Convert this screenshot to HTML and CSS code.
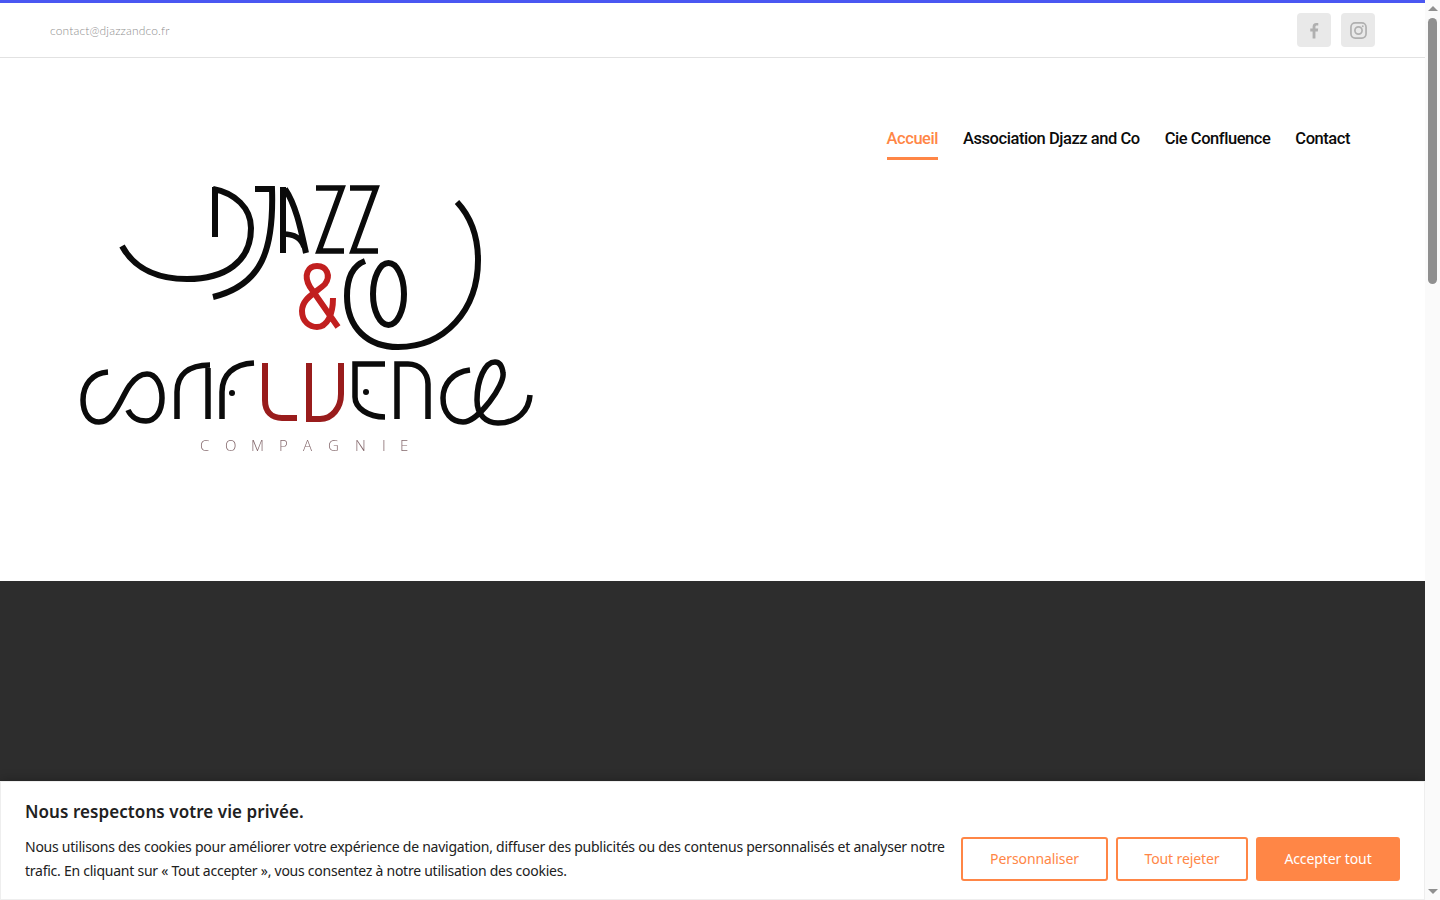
FILE: index.html
```html
<!DOCTYPE html>
<html lang="fr">
<head>
<meta charset="utf-8">
<title>Djazz and Co</title>
<link rel="stylesheet" href="styles.css">
</head>
<body>
<div class="shell">
  <div class="page">
    <div class="topbar">
      <a class="email">contact@djazzandco.fr</a>
      <div class="socials">
        <a class="social">
          <svg class="social-icon" viewBox="0 0 16 18"><path class="glyph-fill" d="M6 17.500V10H3.500V7H6V5C6 2.500 7.500 1 9.800 1c1 0 1.900.1 2.200.1v2.700h-1.500C9.300 3.800 9 4.400 9 5.300V7h2.900l-.4 3H9v7.500z"/></svg>
        </a>
        <a class="social">
          <svg class="social-icon" viewBox="0 0 18 18"><rect class="glyph-line" x="1" y="1" width="16" height="16" rx="4.500"/><circle class="glyph-line" cx="9" cy="9" r="3.800"/><circle class="glyph-fill" cx="13.500" cy="4.500" r="1"/></svg>
        </a>
      </div>
    </div>
    <header class="masthead">
      <svg class="logo" viewBox="70 175 480 290" role="img" aria-label="Djazz and Co Confluence Compagnie">
        <g class="ink upper">
          <path d="M122,246 C135,270 160,279 187,279 C225,279 251,262 251,228 C251,208 235,193 213,189"/>
          <path d="M215,187 V237"/>
          <path d="M255,189 H272 C274,250 262,285 213,297"/>
          <path d="M283,253 V187"/>
          <path d="M285,189 C296,205 301,230 306,253"/>
          <path class="thin" d="M283,234 C292,234 301,237 304,247"/>
          <path class="thin" d="M316,188 H342 L319,251 H344"/>
          <path class="thin" d="M350,188 H376 L353,251 H378"/>
          <path d="M365,261 C352,266 347,280 347,296 C347,328 368,347 398,347 C445,347 478,310 478,260 C478,235 470,216 457,202"/>
          <ellipse cx="388.500" cy="294" rx="15.500" ry="31"/>
        </g>
        <g class="ink">
          <path d="M108,372 C92,373 83,385 83,400 C83,414 90,422 99,422 C115,422 122,395 130,385 C135,378 140,374 147,374 C156,374 162,385 162,398 C162,412 155,421 146,421 C138,421 131,417 128,410"/>
          <path d="M177,419 V392 C177,375 188,365 210,365"/>
          <path d="M208,419 V368"/>
          <path d="M222,419 V392 C222,375 233,364 254,363"/>
          <path d="M385,364 H355 V397 C355,408 368,417 385,417"/>
          <path d="M397,419 V364 H408 C420,364 428,373 428,384 V419"/>
          <path d="M470,370 C452,372 443,385 443,398 C443,413 452,422 463,422 C478,422 505,385 503,373 C502,365 499,362 495,362 C485,362 477,380 477,400 C477,415 486,423 498,423 C518,423 529,410 530,395"/>
        </g>
        <circle class="dot" cx="232" cy="393" r="3"/>
        <circle class="dot" cx="366" cy="392" r="3"/>
        <g class="red">
          <path d="M338,327 L310,287 C303,275 308,266 317,266 C327,266 331,276 325,284 C316,293 302,298 302,311 C302,322 310,327 317,327 C327,327 333,315 333,298"/>
        </g>
        <g class="maroon">
          <path d="M265,363 V400 C265,412 272,418 282,418 H297"/>
          <path d="M309,363 V419 H320 C332,419 341,408 341,394 V363"/>
        </g>
        <text class="compagnie" x="200 225 251 279 303 328 355 382 400" y="451">COMPAGNIE</text>
      </svg>
      <nav class="nav">
        <a class="nav-link active">Accueil</a>
        <a class="nav-link">Association Djazz and Co</a>
        <a class="nav-link">Cie Confluence</a>
        <a class="nav-link">Contact</a>
      </nav>
    </header>
    <section class="dark"></section>
    <aside class="cookie">
      <h2 class="cookie-title">Nous respectons votre vie privée.</h2>
      <div class="cookie-row">
        <p class="cookie-text">Nous utilisons des cookies pour améliorer votre expérience de navigation, diffuser des publicités ou des contenus personnalisés et analyser notre trafic. En cliquant sur « Tout accepter », vous consentez à notre utilisation des cookies.</p>
        <div class="cookie-actions">
          <button class="btn btn-custom">Personnaliser</button>
          <button class="btn btn-reject">Tout rejeter</button>
          <button class="btn btn-accept">Accepter tout</button>
        </div>
      </div>
    </aside>
  </div>
  <div class="scrollbar">
    <span class="arrow arrow-up"></span>
    <span class="thumb"></span>
    <span class="arrow arrow-down"></span>
  </div>
</div>
</body>
</html>
```
FILE: styles.css
```css
* { box-sizing: border-box; }
html, body { margin: 0; height: 900px; overflow: hidden; background: #fff; }
body { font-family: "Noto Sans", sans-serif; }
.shell { display: flex; height: 900px; }
.page { position: relative; width: 1425px; display: flex; flex-direction: column; }

.topbar {
  height: 58px;
  border-top: 3px solid #4a57f2;
  border-bottom: 1px solid #e2e2e2;
  display: flex;
  align-items: center;
  justify-content: space-between;
  padding: 0 50px;
}
.email { font-family: "Lato", sans-serif; font-weight: 300; font-size: 12px; color: #8f8f8f; letter-spacing: 0.15px; }
.socials { display: flex; gap: 10px; }
.social { width: 34px; height: 34px; border-radius: 4px; background: #e9e9e9; display: flex; align-items: center; justify-content: center; }
.social-icon { width: 17px; height: 17px; display: block; }
.glyph-fill { fill: #b0b0b0; }
.glyph-line { fill: none; stroke: #b0b0b0; stroke-width: 1.800; }

.masthead {
  height: 523px;
  display: flex;
  justify-content: space-between;
  align-items: flex-start;
  padding: 69px 75px 0 70px;
}
.logo { width: 480px; height: 290px; margin-top: 48px; display: block; filter: blur(0.35px); }
.ink path, .ink ellipse { fill: none; stroke: #0b0b0b; stroke-width: 5.500; }
.ink.upper path, .ink.upper ellipse { stroke-width: 6; }
.ink.upper .thin { stroke-width: 5.500; }
.dot { fill: #0b0b0b; }
.red path { fill: none; stroke: #c11f1f; stroke-width: 6; }
.maroon path { fill: none; stroke: #991c1c; stroke-width: 6; }
.compagnie { font-family: "Open Sans", sans-serif; font-weight: 300; font-size: 15px; fill: #84686c; }

.nav { display: flex; gap: 25px; }
.nav-link {
  font-family: "Roboto", sans-serif;
  font-weight: 500;
  font-size: 16.500px;
  letter-spacing: -0.45px;
  line-height: 24px;
  color: #0b0b0b;
  padding-bottom: 6px;
  border-bottom: 3px solid transparent;
}
.nav-link.active { color: #ff8646; border-bottom-color: #ff8646; }

.dark { flex: 1; background: #2d2d2d; }

.cookie {
  position: absolute;
  left: 0;
  right: 0;
  bottom: 0;
  height: 119px;
  background: #fff;
  border: 1px solid #eeeeee;
  box-shadow: 0 -1px 10px rgba(0, 0, 0, 0.25);
  padding: 18px 24px 0;
}
.cookie-title { margin: 0; font-family: "Noto Sans", sans-serif; font-size: 17px; line-height: 24px; font-weight: 600; letter-spacing: 0.07px; color: #212121; }
.cookie-row { display: flex; align-items: center; justify-content: space-between; gap: 16px; margin-top: 11px; }
.cookie-text { margin: 0; flex: 1; font-size: 14px; letter-spacing: -0.25px; line-height: 24px; color: #212121; }
.cookie-actions { display: flex; gap: 8px; }
.btn {
  height: 44px;
  border: 2px solid #ff8646;
  border-radius: 3px;
  background: #fff;
  color: #ff8646;
  font-family: "Noto Sans", sans-serif;
  font-size: 14px;
  letter-spacing: -0.1px;
  padding: 0 0 2px;
}
.btn-custom { width: 147px; }
.btn-reject { width: 132px; }
.btn-accept { width: 144px; background: #ff8646; color: #fff; }

.scrollbar { width: 15px; background: #fafafa; position: relative; display: flex; flex-direction: column; align-items: center; }
.thumb { width: 9px; height: 266px; border-radius: 5px; background: #8f8f8f; margin-top: 2px; }
.arrow { width: 0; height: 0; border-left: 5px solid transparent; border-right: 5px solid transparent; }
.arrow-up { border-bottom: 5px solid #8f8f8f; margin-top: 6px; margin-bottom: 5px; }
.arrow-down { border-top: 5px solid #8f8f8f; margin-top: auto; margin-bottom: 6px; }
```
